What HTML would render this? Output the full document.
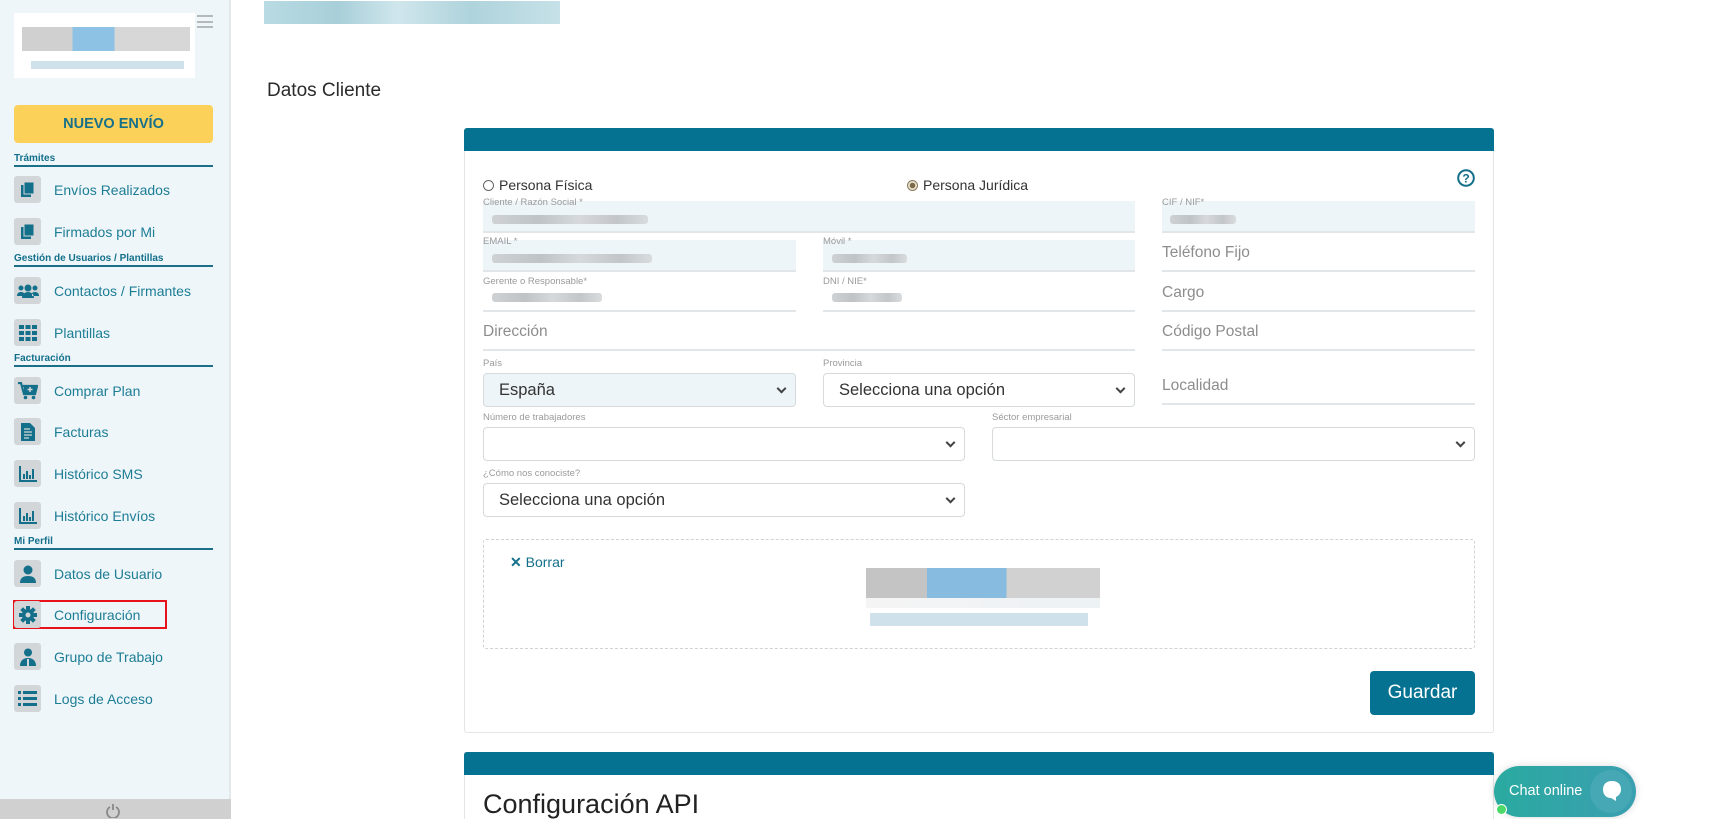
<!DOCTYPE html>
<html><head><meta charset="utf-8"><style>
*{box-sizing:border-box;margin:0;padding:0}
html,body{width:1721px;height:819px;overflow:hidden}
body{background:#fff;font-family:"Liberation Sans",sans-serif;position:relative}
.a{position:absolute}
.side{left:0;top:0;width:231px;height:819px;background:#eef6fa;border-right:2px solid #e3e8ea}
.sec{left:14px;width:199px;font-size:10px;font-weight:bold;color:#136f8a;border-bottom:2px solid #1b6f86;padding-bottom:1px}
.it{left:14px;height:27px;width:200px}
.ib{position:absolute;left:0;top:0;width:27px;height:27px;background:#d2d6d8;border-radius:3px;display:flex;align-items:center;justify-content:center}
.it span{position:absolute;left:40px;top:6px;font-size:14px;color:#1d7d94;white-space:nowrap}
.lab{font-size:9.5px;color:#9a9a9a}
.inp{border-bottom:2px solid #e2e6e8}
.fill{background:#eef5f9}
.ph{font-size:15.5px;color:#8d8d8d}
.sel{border:1px solid #d6dadc;border-radius:4px;font-size:16.5px;color:#333;padding-left:15px;display:flex;align-items:center}
.chev{position:absolute;right:10px;top:50%;width:7px;height:7px;border-right:2px solid #444;border-bottom:2px solid #444;transform:translateY(-70%) rotate(45deg)}
.blur{height:9px;border-radius:3px;background:linear-gradient(90deg,#cfd2d4,#bfc3c5 30%,#d6d9db 55%,#c3c6c8 80%,#d9dcde)}
</style></head><body>
<div class="a side"></div>
<div class="a" style="left:14px;top:13px;width:181px;height:65px;background:#fff"></div>
<div class="a" style="left:22px;top:27px;width:168px;height:24px;background:linear-gradient(90deg,#bcbcbc 0 30%,#5ea8d8 30% 55%,#c6c6c6 55% 100%);opacity:.7"></div>
<div class="a" style="left:31px;top:61px;width:153px;height:8px;background:#cfe2ec"></div>
<div class="a" style="left:197px;top:15px;width:16px;height:13px;border-top:2px solid #b5b9bb;border-bottom:2px solid #b5b9bb"><div style="margin-top:3.5px;height:2px;background:#b5b9bb"></div></div>
<div class="a" style="left:14px;top:105px;width:199px;height:38px;background:#fcd15a;border-radius:4px;color:#16708a;font-weight:bold;font-size:14.5px;text-align:center;line-height:38px">NUEVO ENVÍO</div>

<div class="a sec" style="top:153px">Trámites</div>
<div class="a it" style="top:176px"><div class="ib"><svg width="16" height="17" viewBox="0 0 16 17"><rect x="1" y="4" width="10" height="12" fill="#136f8a"/><rect x="4" y="1" width="10" height="12" fill="#136f8a" stroke="#d2d6d8"/></svg></div><span>Envíos Realizados</span></div>
<div class="a it" style="top:218px"><div class="ib"><svg width="16" height="17" viewBox="0 0 16 17"><rect x="1" y="4" width="10" height="12" fill="#136f8a"/><rect x="4" y="1" width="10" height="12" fill="#136f8a" stroke="#d2d6d8"/></svg></div><span>Firmados por Mi</span></div>
<div class="a sec" style="top:253px">Gestión de Usuarios / Plantillas</div>
<div class="a it" style="top:277px"><div class="ib"><svg width="22" height="16" viewBox="0 0 22 16"><circle cx="11" cy="5" r="3.5" fill="#136f8a"/><circle cx="4" cy="5" r="2.5" fill="#136f8a"/><circle cx="18" cy="5" r="2.5" fill="#136f8a"/><path d="M5 15c0-4 3-6 6-6s6 2 6 6zM0 13c0-3 2-4 4-4s3 1 3 1v3zM22 13c0-3-2-4-4-4s-3 1-3 1v3z" fill="#136f8a"/></svg></div><span>Contactos / Firmantes</span></div>
<div class="a it" style="top:319px"><div class="ib"><svg width="18" height="16" viewBox="0 0 18 16" fill="#136f8a"><rect x="0" y="0" width="5" height="4"/><rect x="6.5" y="0" width="5" height="4"/><rect x="13" y="0" width="5" height="4"/><rect x="0" y="6" width="5" height="4"/><rect x="6.5" y="6" width="5" height="4"/><rect x="13" y="6" width="5" height="4"/><rect x="0" y="12" width="5" height="4"/><rect x="6.5" y="12" width="5" height="4"/><rect x="13" y="12" width="5" height="4"/></svg></div><span>Plantillas</span></div>
<div class="a sec" style="top:353px">Facturación</div>
<div class="a it" style="top:377px"><div class="ib"><svg width="20" height="18" viewBox="0 0 20 18"><path d="M0 1h3l3 11h11l2-8H5" fill="none" stroke="#136f8a" stroke-width="2.2"/><rect x="6" y="4" width="12" height="7" fill="#136f8a"/><circle cx="7.5" cy="15.5" r="1.8" fill="#136f8a"/><circle cx="15.5" cy="15.5" r="1.8" fill="#136f8a"/><path d="M12 5v5M9.5 7.5h5" stroke="#d2d6d8" stroke-width="1.5"/></svg></div><span>Comprar Plan</span></div>
<div class="a it" style="top:418px"><div class="ib"><svg width="14" height="18" viewBox="0 0 14 18"><path d="M0 0h9l5 5v13H0z" fill="#136f8a"/><path d="M3 6h6M3 9h8M3 12h8M3 15h5" stroke="#d2d6d8" stroke-width="1.3"/></svg></div><span>Facturas</span></div>
<div class="a it" style="top:460px"><div class="ib"><svg width="18" height="16" viewBox="0 0 18 16"><path d="M1 0v15h17" fill="none" stroke="#136f8a" stroke-width="2"/><path d="M5 8v5M8 5v8M11 9v4M14 3v10" stroke="#136f8a" stroke-width="2"/></svg></div><span>Histórico SMS</span></div>
<div class="a it" style="top:502px"><div class="ib"><svg width="18" height="16" viewBox="0 0 18 16"><path d="M1 0v15h17" fill="none" stroke="#136f8a" stroke-width="2"/><path d="M5 8v5M8 5v8M11 9v4M14 3v10" stroke="#136f8a" stroke-width="2"/></svg></div><span>Histórico Envíos</span></div>
<div class="a sec" style="top:536px">Mi Perfil</div>
<div class="a it" style="top:560px"><div class="ib"><svg width="16" height="18" viewBox="0 0 16 18" fill="#136f8a"><circle cx="8" cy="5" r="4.5"/><path d="M0 18c0-5 3-7 8-7s8 2 8 7z"/></svg></div><span>Datos de Usuario</span></div>
<div class="a" style="left:13px;top:600px;width:154px;height:29px;border:2px solid #e8121b"></div>
<div class="a it" style="top:601px"><div class="ib"><svg width="18" height="18" viewBox="0 0 18 18"><g fill="#136f8a"><circle cx="9" cy="9" r="6"/><rect x="7" y="0" width="4" height="18"/><rect x="0" y="7" width="18" height="4"/><rect x="7" y="0" width="4" height="18" transform="rotate(45 9 9)"/><rect x="7" y="0" width="4" height="18" transform="rotate(-45 9 9)"/></g><circle cx="9" cy="9" r="2.5" fill="#d2d6d8"/></svg></div><span>Configuración</span></div>
<div class="a it" style="top:643px"><div class="ib"><svg width="16" height="18" viewBox="0 0 16 18" fill="#136f8a"><circle cx="8" cy="4.5" r="4"/><path d="M0 18c0-5 3-8 8-8s8 3 8 8z"/><path d="M7 11h2v7H7z" fill="#d2d6d8"/></svg></div><span>Grupo de Trabajo</span></div>
<div class="a it" style="top:685px"><div class="ib"><svg width="19" height="15" viewBox="0 0 19 15" fill="#136f8a"><rect x="0" y="0" width="3" height="3"/><rect x="5" y="0" width="14" height="3"/><rect x="0" y="6" width="3" height="3"/><rect x="5" y="6" width="14" height="3"/><rect x="0" y="12" width="3" height="3"/><rect x="5" y="12" width="14" height="3"/></svg></div><span>Logs de Acceso</span></div>
<div class="a" style="left:0;top:799px;width:231px;height:20px;background:#d0d0d0"></div>
<svg class="a" style="left:106px;top:804px" width="14" height="14" viewBox="0 0 14 14"><path d="M4 3a6 6 0 1 0 6 0" fill="none" stroke="#888" stroke-width="1.8"/><path d="M7 0v6" stroke="#888" stroke-width="1.8"/></svg>

<div class="a" style="left:264px;top:1px;width:296px;height:23px;background:linear-gradient(90deg,#b9dbe3,#a8cfd9 25%,#cfe6ec 45%,#afd3dc 70%,#c6e1e8);"></div>
<div class="a" style="left:267px;top:80px;font-size:19px;color:#2b2b2b">Datos Cliente</div>

<div class="a" style="left:464px;top:128px;width:1030px;height:605px;border:1px solid #e3e5e6;border-radius:3px"></div>
<div class="a" style="left:464px;top:128px;width:1030px;height:23px;background:#067292;border-radius:3px 3px 0 0"></div>

<div class="a" style="left:483px;top:177px;font-size:14px;color:#333;display:flex;align-items:center"><span style="width:11px;height:11px;border:1px solid #666;border-radius:50%;display:inline-block;margin-right:5px"></span>Persona Física</div>
<div class="a" style="left:907px;top:177px;font-size:14px;color:#333;display:flex;align-items:center"><span style="width:11px;height:11px;border:1px solid #8a7a5a;border-radius:50%;display:inline-block;margin-right:5px;background:radial-gradient(#7a6a48 0 2.5px,#e8e0d0 3px)"></span>Persona Jurídica</div>
<svg class="a" style="left:1457px;top:169px" width="18" height="18" viewBox="0 0 18 18"><circle cx="9" cy="9" r="7.8" fill="none" stroke="#136f8a" stroke-width="2"/><text x="9" y="13.5" font-size="12" font-weight="bold" text-anchor="middle" fill="#136f8a" font-family="Liberation Sans">?</text></svg>

<div class="a fill inp" style="left:483px;top:201px;width:652px;height:32px"></div>
<div class="a lab" style="left:483px;top:197px">Cliente / Razón Social *</div>
<div class="a blur" style="left:492px;top:215px;width:156px"></div>
<div class="a fill inp" style="left:1162px;top:201px;width:313px;height:32px"></div>
<div class="a lab" style="left:1162px;top:197px">CIF / NIF*</div>
<div class="a blur" style="left:1170px;top:215px;width:66px"></div>

<div class="a fill inp" style="left:483px;top:240px;width:313px;height:32px"></div>
<div class="a lab" style="left:483px;top:236px">EMAIL *</div>
<div class="a blur" style="left:492px;top:254px;width:160px"></div>
<div class="a fill inp" style="left:823px;top:240px;width:312px;height:32px"></div>
<div class="a lab" style="left:823px;top:236px">Móvil *</div>
<div class="a blur" style="left:832px;top:254px;width:75px"></div>
<div class="a inp" style="left:1162px;top:240px;width:313px;height:32px"></div>
<div class="a ph" style="left:1162px;top:244px">Teléfono Fijo</div>

<div class="a inp" style="left:483px;top:279px;width:313px;height:33px"></div>
<div class="a lab" style="left:483px;top:276px">Gerente o Responsable*</div>
<div class="a blur" style="left:492px;top:293px;width:110px"></div>
<div class="a inp" style="left:823px;top:279px;width:312px;height:33px"></div>
<div class="a lab" style="left:823px;top:276px">DNI / NIE*</div>
<div class="a blur" style="left:832px;top:293px;width:70px"></div>
<div class="a inp" style="left:1162px;top:279px;width:313px;height:33px"></div>
<div class="a ph" style="left:1162px;top:284px">Cargo</div>

<div class="a inp" style="left:483px;top:318px;width:652px;height:33px"></div>
<div class="a ph" style="left:483px;top:323px">Dirección</div>
<div class="a inp" style="left:1162px;top:318px;width:313px;height:33px"></div>
<div class="a ph" style="left:1162px;top:323px">Código Postal</div>

<div class="a lab" style="left:483px;top:358px">País</div>
<div class="a sel" style="left:483px;top:373px;width:313px;height:34px;background:#eef5f9">España<i class="chev"></i></div>
<div class="a lab" style="left:823px;top:358px">Provincia</div>
<div class="a sel" style="left:823px;top:373px;width:312px;height:34px">Selecciona una opción<i class="chev"></i></div>
<div class="a inp" style="left:1162px;top:372px;width:313px;height:33px"></div>
<div class="a ph" style="left:1162px;top:377px">Localidad</div>

<div class="a lab" style="left:483px;top:412px">Número de trabajadores</div>
<div class="a sel" style="left:483px;top:427px;width:482px;height:34px"><i class="chev"></i></div>
<div class="a lab" style="left:992px;top:412px">Séctor empresarial</div>
<div class="a sel" style="left:992px;top:427px;width:483px;height:34px"><i class="chev"></i></div>

<div class="a lab" style="left:483px;top:468px">¿Cómo nos conociste?</div>
<div class="a sel" style="left:483px;top:483px;width:482px;height:34px">Selecciona una opción<i class="chev"></i></div>

<div class="a" style="left:483px;top:539px;width:992px;height:110px;border:1px dashed #cfd3d5;border-radius:3px"></div>
<div class="a" style="left:510px;top:554px;font-size:14px;color:#136f8a"><b>✕</b> Borrar</div>
<div class="a" style="left:866px;top:568px;width:234px;height:30px;background:linear-gradient(90deg,#b0b0b0 0 26%,#5fa6d6 26% 60%,#c2c2c2 60% 100%);opacity:.75"></div>
<div class="a" style="left:866px;top:598px;width:234px;height:10px;background:linear-gradient(90deg,#f2f2f2,#e8eef2);opacity:.8"></div>
<div class="a" style="left:870px;top:613px;width:218px;height:13px;background:#cfe2ec"></div>
<div class="a" style="left:1370px;top:671px;width:105px;height:44px;background:#067292;border-radius:4px;color:#fff;font-size:19px;text-align:center;line-height:44px">Guardar</div>

<div class="a" style="left:464px;top:752px;width:1030px;height:67px;border:1px solid #e3e5e6;border-bottom:none"></div>
<div class="a" style="left:464px;top:752px;width:1030px;height:23px;background:#067292;border-radius:3px 3px 0 0"></div>
<div class="a" style="left:483px;top:790px;font-size:27px;color:#222;line-height:29px">Configuración API</div>

<div class="a" style="left:1494px;top:766px;width:142px;height:51px;border-radius:26px;background:linear-gradient(90deg,#2aaaa0,#3a9fb0);box-shadow:0 0 8px rgba(0,0,0,.15)"></div>
<div class="a" style="left:1509px;top:783px;font-size:14.5px;color:#fff">Chat online</div>
<div class="a" style="left:1590px;top:770px;width:42px;height:43px;border-radius:50%;background:#45a8b4"></div>
<svg class="a" style="left:1600px;top:779px" width="24" height="24" viewBox="0 0 24 24"><path d="M12 2C6 2 3 5.5 3 10.5S6 19 11 19l5 3v-4c3-1.5 5-4 5-7.5C21 5.5 18 2 12 2z" fill="#fff"/></svg>
<div class="a" style="left:1496px;top:804px;width:11px;height:11px;border-radius:50%;background:#4cd96a;border:1px solid #fff"></div>
</body></html>
